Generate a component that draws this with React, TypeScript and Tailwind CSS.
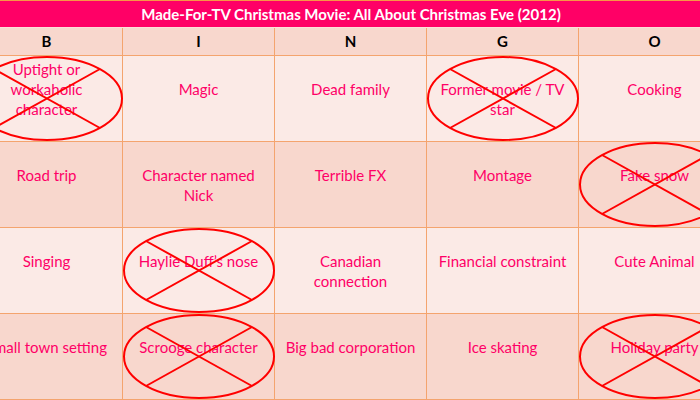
const rows: { text: string[]; pt: string; x?: boolean }[][] = [
  [
    { text: ["Uptight or", "workaholic", "character"], pt: "pt-[3px]", x: true },
    { text: ["Magic"], pt: "pt-[23px]" },
    { text: ["Dead family"], pt: "pt-[23px]" },
    { text: ["Former movie / TV", "star"], pt: "pt-[23px]", x: true },
    { text: ["Cooking"], pt: "pt-[23px]" },
  ],
  [
    { text: ["Road trip"], pt: "pt-[23px]" },
    { text: ["Character named", "Nick"], pt: "pt-[23px]" },
    { text: ["Terrible FX"], pt: "pt-[23px]" },
    { text: ["Montage"], pt: "pt-[23px]" },
    { text: ["Fake snow"], pt: "pt-[23px]", x: true },
  ],
  [
    { text: ["Singing"], pt: "pt-[23px]" },
    { text: ["Haylie Duff’s nose"], pt: "pt-[23px]", x: true },
    { text: ["Canadian", "connection"], pt: "pt-[23px]" },
    { text: ["Financial constraint"], pt: "pt-[23px]" },
    { text: ["Cute Animal"], pt: "pt-[23px]" },
  ],
  [
    { text: ["Small town setting"], pt: "pt-[23px]" },
    { text: ["Scrooge character"], pt: "pt-[23px]", x: true },
    { text: ["Big bad corporation"], pt: "pt-[23px]" },
    { text: ["Ice skating"], pt: "pt-[23px]" },
    { text: ["Holiday party"], pt: "pt-[23px]", x: true },
  ],
]

function Cross() {
  return (
    <svg className="absolute left-0 top-0" width="152" height="85" viewBox="0 0 152 85">
      <ellipse cx="76" cy="42.5" rx="75" ry="41.5" fill="none" stroke="#ff0000" strokeWidth="2" />
      <line x1="23" y1="13" x2="129" y2="72" stroke="#ff0000" strokeWidth="2" />
      <line x1="129" y1="13" x2="23" y2="72" stroke="#ff0000" strokeWidth="2" />
    </svg>
  )
}

export default function App() {
  return (
    <div className="w-[700px] h-[400px] overflow-hidden bg-white font-['Lato','Liberation_Sans',sans-serif]">
      <div className="ml-[-29px] w-[760px]">
        <div className="h-[28px] bg-[#ff0066] border-t border-[#f79646] border-b border-b-[#fde0d8] flex items-center justify-center text-white font-bold text-[15px]">
          Made-For-TV Christmas Movie: All About Christmas Eve (2012)
        </div>
        <div className="grid grid-cols-5 h-[28px] bg-[#f8d7cd]">
          {["B", "I", "N", "G", "O"].map((l) => (
            <div
              key={l}
              className="border-r border-b border-[#f4a46e] flex items-center justify-center font-bold text-[15px] text-black"
            >
              {l}
            </div>
          ))}
        </div>
        {rows.map((row, i) => (
          <div key={i} className={`grid grid-cols-5 h-[86px] ${i % 2 === 0 ? "bg-[#fbeae6]" : "bg-[#f8d7cd]"}`}>
            {row.map((c, j) => (
              <div
                key={j}
                className={`relative border-r border-b border-[#f4a46e] text-center text-[#ff0066] text-[15px] leading-[20px] whitespace-nowrap ${c.pt}`}
              >
                {c.text.map((t, k) => (
                  <div key={k}>{t}</div>
                ))}
                {c.x && <Cross />}
              </div>
            ))}
          </div>
        ))}
      </div>
    </div>
  )
}
